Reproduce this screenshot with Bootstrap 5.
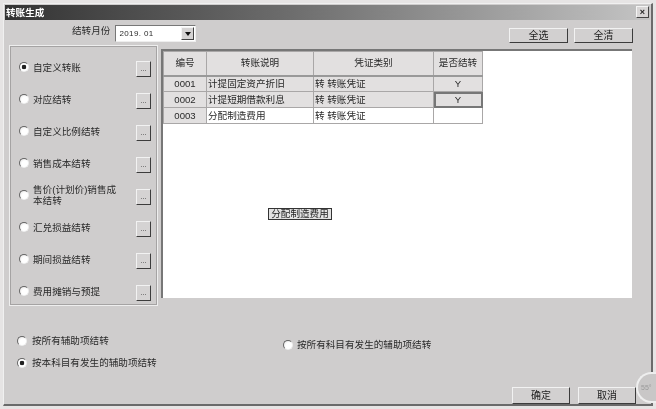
<!DOCTYPE html>
<html lang="zh">
<head>
  <meta charset="UTF-8">
  <title>转账生成</title>
  <link href="https://cdn.jsdelivr.net/npm/bootstrap@5.3.0/dist/css/bootstrap.min.css" rel="stylesheet">
  <style>
    html, body { height: 100%; margin: 0; background: #e6e4e4; overflow: hidden; }
    body { font: 9.6px/1 "Liberation Sans", "Noto Sans CJK SC", sans-serif; color: #2a2a2a; }
    .win { position: relative; margin: 3px 3px 0 3px; height: 403px; background: #cfcdcd; border-right: 2px solid #6a6a6a; border-bottom: 2px solid #6a6a6a; border-left: 1px solid #f0f0f0; border-top: 1px solid #f0f0f0; filter: blur(.45px); }
    .title-bar { height: 15px; margin: 1px 1px 0; padding-left: 1px; background: linear-gradient(90deg, #333 0%, #6e6e6e 45%, #c4c4c4 100%); color: #fff; font-weight: 700; line-height: 15px; }
    .close-x { width: 13px; height: 12px; margin: 1px 1px 0 0; background: #d8d6d6; border: 1px solid; border-color: #f4f4f4 #444 #444 #f4f4f4; color: #222; font-size: 9px; line-height: 10px; text-align: center; }
    .top-row { height: 25px; padding: 5px 18px 0 68px; }
    .month-label { margin-top: 1px; }
    .month-box { width: 81px; height: 17px; margin-left: 1px; background: #fff; border: 1px solid; border-color: #777 #eee #eee #777; padding-left: 3px; font-size: 8px; letter-spacing: .4px; }
    .month-arrow { width: 13px; height: 13px; margin-right: 1px; background: #d5d3d3; border: 1px solid; border-color: #f4f4f4 #444 #444 #f4f4f4; }
    .month-arrow::after { content: ""; display: block; margin: 4px auto 0; width: 0; border: 3px solid transparent; border-top: 4px solid #111; border-bottom: 0; }
    .top-btns { margin-top: 3px; gap: 6px; }
    .win-btn { width: 59px; height: 15px; padding: 0; background: #d2d0d0; border: 1px solid; border-color: #f2f2f2 #3c3c3c #3c3c3c #f2f2f2; border-radius: 0; color: #222; font-size: 10px; line-height: 13px; }
    .main-row { height: 261px; margin-left: 5px; }
    .side-panel { width: 149px; height: 261px; padding: 5px 6px 0 9px; border: 1px solid #eee; outline: 1px solid #a5a3a3; outline-offset: -2px; }
    .side-item { height: 32px; }
    .side-item label { width: 99px; line-height: 11px; }
    .dot-btn { width: 15px; height: 16px; margin-top: 4px; padding: 0; background: #d5d3d3; border: 1px solid; border-color: #f2f2f2 #3c3c3c #3c3c3c #f2f2f2; border-radius: 0; color: #444; font-size: 8px; line-height: 14px; }
    .radio-mark { flex: none; width: 10px; height: 10px; border-radius: 50%; background: radial-gradient(circle at 65% 65%, #fff 0 45%, #dedcdc 100%); border: 1px solid; border-color: #666 #eee #eee #666; }
    .radio-mark.on { background: radial-gradient(circle, #222 0 2px, #fff 2.6px); }
    .opt-row { gap: 5px; }
    .grid-panel { width: 471px; height: 249px; margin: 4px 0 0 3px; background: #fff; border-top: 2px solid #777; border-left: 2px solid #777; }
    .xls { width: 319px; border-collapse: collapse; table-layout: fixed; }
    .xls th, .xls td { border: 1px solid #a9a7a7; padding: 0 0 0 1px; font-weight: 400; height: 16px; }
    .xls th { height: 24px; background: #e2e0e0; text-align: center; padding: 0; border-bottom: 2px solid #999; }
    .xls .gray { background: #e2e0e0; }
    .xls .mid { text-align: center; padding: 0; }
    .xls .picked { outline: 2px solid #777; outline-offset: -2px; }
    .tip-box { position: absolute; left: 264px; top: 204px; width: 64px; height: 12px; background: #e2e2e2; border: 1px solid #333; text-align: center; line-height: 10px; color: #222; }
    .bottom-opts { height: 81px; padding: 30px 0 0 13px; }
    .bottom-col { width: 266px; }
    .foot-btns { padding-right: 15px; }
    .foot-btns .win-btn { width: 58px; height: 17px; }
    .temp-ball { position: absolute; right: -5px; bottom: 1px; width: 20px; height: 31px; border-radius: 16px 0 0 16px; background: #c9c7c7; border: 2px solid #eee; border-right: 0; color: #999; font-size: 7px; line-height: 27px; padding-left: 3px; overflow: hidden; }
  </style>
</head>
<body>
  <div class="win">
    <div class="title-bar d-flex justify-content-between">
      <span>转账生成</span>
      <span class="close-x">×</span>
    </div>

    <div class="top-row d-flex align-items-start">
      <span class="month-label me-1">结转月份</span>
      <div class="month-box d-flex align-items-center justify-content-between">
        <span>2019. 01</span><span class="month-arrow"></span>
      </div>
      <div class="top-btns ms-auto d-flex">
        <button class="win-btn" type="button">全选</button>
        <button class="win-btn" type="button">全清</button>
      </div>
    </div>

    <div class="main-row d-flex">
      <div class="side-panel">
        <div class="side-item d-flex align-items-center gap-1"><span class="radio-mark on"></span><label>自定义转账</label><button class="dot-btn" type="button">...</button></div>
        <div class="side-item d-flex align-items-center gap-1"><span class="radio-mark"></span><label>对应结转</label><button class="dot-btn" type="button">...</button></div>
        <div class="side-item d-flex align-items-center gap-1"><span class="radio-mark"></span><label>自定义比例结转</label><button class="dot-btn" type="button">...</button></div>
        <div class="side-item d-flex align-items-center gap-1"><span class="radio-mark"></span><label>销售成本结转</label><button class="dot-btn" type="button">...</button></div>
        <div class="side-item d-flex align-items-center gap-1"><span class="radio-mark"></span><label>售价(计划价)销售成<br>本结转</label><button class="dot-btn" type="button">...</button></div>
        <div class="side-item d-flex align-items-center gap-1"><span class="radio-mark"></span><label>汇兑损益结转</label><button class="dot-btn" type="button">...</button></div>
        <div class="side-item d-flex align-items-center gap-1"><span class="radio-mark"></span><label>期间损益结转</label><button class="dot-btn" type="button">...</button></div>
        <div class="side-item d-flex align-items-center gap-1"><span class="radio-mark"></span><label>费用摊销与预提</label><button class="dot-btn" type="button">...</button></div>
      </div>

      <div class="grid-panel">
        <table class="xls">
          <colgroup><col style="width:43px"><col style="width:107px"><col style="width:120px"><col style="width:49px"></colgroup>
          <tr><th>编号</th><th>转账说明</th><th>凭证类别</th><th>是否结转</th></tr>
          <tr class="gray"><td class="mid">0001</td><td>计提固定资产折旧</td><td>转 转账凭证</td><td class="mid">Y</td></tr>
          <tr class="gray"><td class="mid">0002</td><td>计提短期借款利息</td><td>转 转账凭证</td><td class="mid picked">Y</td></tr>
          <tr><td class="mid gray">0003</td><td>分配制造费用</td><td>转 转账凭证</td><td></td></tr>
        </table>
      </div>
    </div>

    <div class="tip-box">分配制造费用</div>

    <div class="bottom-opts d-flex">
      <div class="bottom-col d-flex flex-column gap-2">
        <div class="opt-row d-flex align-items-center"><span class="radio-mark"></span><label>按所有辅助项结转</label></div>
        <div class="opt-row d-flex align-items-center mt-1"><span class="radio-mark on"></span><label>按本科目有发生的辅助项结转</label></div>
      </div>
      <div class="d-flex align-items-start gap-1 pt-1">
        <span class="radio-mark"></span><label>按所有科目有发生的辅助项结转</label>
      </div>
    </div>

    <div class="foot-btns d-flex justify-content-end gap-2">
      <button class="win-btn" type="button">确定</button>
      <button class="win-btn" type="button">取消</button>
    </div>

    <div class="temp-ball">55°</div>
  </div>
  <script src="https://cdn.jsdelivr.net/npm/bootstrap@5.3.0/dist/js/bootstrap.bundle.min.js"></script>
</body>
</html>
